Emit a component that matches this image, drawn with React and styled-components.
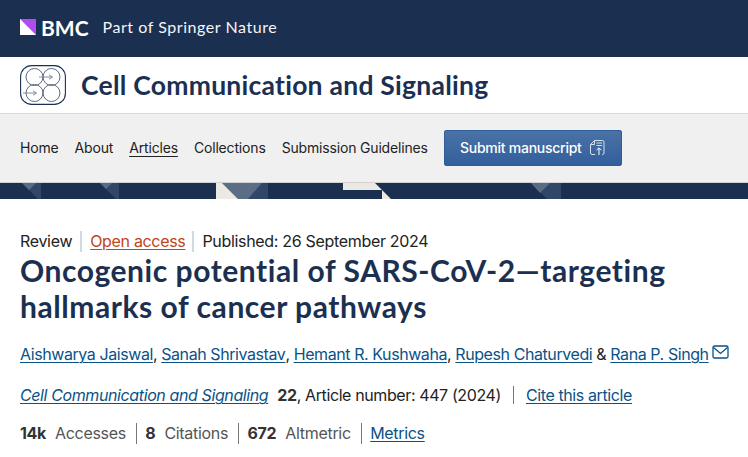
import React from "react";
import styled, { createGlobalStyle } from "styled-components";

const Global = createGlobalStyle`
  html, body { margin: 0; padding: 0; background: #fff; }
  body { font-family: Inter, "Liberation Sans", sans-serif; width: 748px; height: 457px; overflow: hidden; }
`;
const TopBar = styled.header`
  height: 57px; background: #1b3051; color: #fff; display: flex; align-items: center; padding: 0 20px 3px; box-sizing: border-box;
`;
const BrandMark = styled.span`
  display: flex; align-items: center; gap: 5px; margin-right: 14px;
`;
const BrandName = styled.span`
  font: 700 21px/1 Lato, sans-serif;
`;
const Tagline = styled.span`
  font: 400 16px/1 Lato, sans-serif; letter-spacing: .55px; color: #f4f5f7;
`;
const JournalBar = styled.div`
  height: 56px; display: flex; align-items: center; padding: 0 20px; gap: 15px; background: #fff;
`;
const JournalTitle = styled.div`
  font: 700 26.5px/1 Lato, sans-serif; color: #1b3051; letter-spacing: .25px;
`;
const Nav = styled.nav`
  height: 70px; background: #f0f0f0; border-top: 1px solid #dadada; border-bottom: 1px solid #d2d2d2; box-sizing: border-box; display: flex; align-items: center; padding: 0 20px 1px; gap: 16px;
`;
const NavLink = styled.a`
  font-size: 14px; letter-spacing: -.17px; color: #222; text-decoration: ${p => (p.$active ? "underline" : "none")}; text-underline-offset: 3px; text-decoration-thickness: 1px;
`;
const SubmitButton = styled.button`
  flex-shrink: 0; width: 178px; height: 36px; border: 1px solid #2f5f9b; border-radius: 2px; background: linear-gradient(#4a72a6, #325f9c); color: #fff; font: 500 14px Inter, sans-serif; letter-spacing: -.25px; display: flex; align-items: center; justify-content: center; gap: 7px; padding: 0;
`;
const Pattern = styled.svg`
  display: block; width: 748px; height: 16px;
`;
const Main = styled.main`
  padding: 31px 20px 0;
  color: #222;
  letter-spacing: -.32px;
`;
const MetaRow = styled.div`
  display: flex; align-items: center; font-size: 16px; line-height: 22px; height: 22px;
`;
const MetaItem = styled.span`
  padding: 0 7px 0 8px; border-left: ${p => (p.$first ? "none" : "2px solid #cfdae4")};
  ${p => p.$first && "padding: 0 8px 0 0;"}
  height: 21px; line-height: 21px;
`;
const OpenAccess = styled.a`
  color: #c0451a; text-decoration: underline; text-underline-offset: 2px; text-decoration-thickness: 1px;
`;
const Title = styled.h1`
  margin: 0; font: 700 30px/36px Lato, sans-serif; color: #1b3051; letter-spacing: .55px;
`;
const Authors = styled.div`
  margin-top: 18px; font-size: 16px; line-height: 24px; letter-spacing: -.42px; display: flex; align-items: center; white-space: pre;
`;
const A = styled.a`
  color: #0a5287; text-decoration: underline; text-underline-offset: 2px; text-decoration-thickness: 1px;
  ${p => p.$italic && "font-style: italic; margin-right: 9px;"}
`;
const Mail = styled.svg`
  margin-left: 3px; margin-top: -4px; display: block; flex-shrink: 0;
`;
const Citation = styled.div`
  margin-top: 17px; font-size: 16px; line-height: 24px; letter-spacing: -.39px; display: flex; align-items: center; white-space: pre;
`;
const Sep = styled.span`
  display: inline-block; width: 1px; height: ${p => (p.$tall ? "21px" : "18px")}; background: #777;
  margin: ${p => (p.$tall ? "0 8.5px 0 10px" : "0 12px")};
`;
const Metrics = styled.div`
  margin-top: 15px; font-size: 16px; line-height: 22px; display: flex; align-items: center; white-space: pre;
`;
const Strong = styled.b`
  font-weight: 700; color: #333;
`;
const Muted = styled.span`
  color: #555; margin-left: 9px;
`;

export default function App() {
  return (
    <>
      <Global />
      <TopBar>
        <BrandMark>
          <svg width="16" height="16" viewBox="0 0 16 16">
            <rect width="16" height="16" fill="#fff" />
            <path d="M0 0H16V16Z" fill="#b14cf0" />
          </svg>
          <BrandName>BMC</BrandName>
        </BrandMark>
        <Tagline>Part of Springer Nature</Tagline>
      </TopBar>
      <JournalBar>
        <svg width="46" height="40" viewBox="0 0 46 40" fill="none" stroke="#1b3051">
          <rect x=".6" y=".6" width="44.8" height="38.8" rx="11" strokeWidth="1.1" />
          <g strokeWidth=".9" stroke="#4b5a76">
            <circle cx="14.5" cy="12" r="8.5" />
            <circle cx="31.5" cy="12" r="8.5" />
            <circle cx="14.5" cy="28" r="8.5" />
            <circle cx="31.5" cy="28" r="8.5" />
            <path d="M19 12H32M29 9.8L32.5 12L29 14.2" stroke="#7b7f9c" />
            <path d="M3 28H16M13 25.8L16.5 28L13 30.2" stroke="#7b7f9c" />
          </g>
        </svg>
        <JournalTitle>Cell Communication and Signaling</JournalTitle>
      </JournalBar>
      <Nav>
        <NavLink>Home</NavLink>
        <NavLink>About</NavLink>
        <NavLink $active>Articles</NavLink>
        <NavLink>Collections</NavLink>
        <NavLink>Submission Guidelines</NavLink>
        <SubmitButton>
          Submit manuscript
          <svg width="17" height="17" viewBox="0 0 17 17" fill="none" stroke="#d5e0ee" strokeWidth="1">
            <path d="M6 15.5H3A1.5 1.5 0 0 1 1.5 14V5.5L5.5 1.5H13.5A1.5 1.5 0 0 1 15 3V14A1.5 1.5 0 0 1 13.5 15.5H13" />
            <path d="M5.5 1.5V5.5H1.5M7.5 4H13M7.5 6.5H13" />
            <path d="M10 16V9M7.6 11.2L10 8.8L12.4 11.2" stroke="#fff" />
          </svg>
        </SubmitButton>
      </Nav>
      <Pattern viewBox="0 0 748 16">
        <rect width="748" height="16" fill="#1b3051" />
        <path d="M22 0H41V16H38Z" fill="#31476a" />
        <path d="M22 0H36L29 7Z" fill="#5a6c85" />
        <path d="M100 0H119V16H116Z" fill="#31476a" />
        <path d="M100 0H112L106 6Z" fill="#5a6c85" />
        <path d="M262 0H268V16H248Z" fill="#31476a" />
        <path d="M222 0H262L248 16H238Z" fill="#5c6e86" />
        <path d="M216 0H222L238 16H216Z" fill="#ebe9e4" />
        <path d="M343 0H375L391 16H382V7H343Z" fill="#ebe9e4" />
        <path d="M531 0H561V16H547Z" fill="#31476a" />
        <path d="M531 0H550L540 10Z" fill="#5a6c85" />
      </Pattern>
      <Main>
        <MetaRow>
          <MetaItem $first>Review</MetaItem>
          <MetaItem><OpenAccess>Open access</OpenAccess></MetaItem>
          <MetaItem>Published: 26 September 2024</MetaItem>
        </MetaRow>
        <Title>Oncogenic potential of SARS-CoV-2—targeting<br />hallmarks of cancer pathways</Title>
        <Authors>
          <A>Aishwarya Jaiswal</A>, <A>Sanah Shrivastav</A>, <A>Hemant R. Kushwaha</A>, <A>Rupesh Chaturvedi</A> &amp; <A>Rana P. Singh</A>
          <Mail width="17" height="14" viewBox="0 0 17 14" fill="none" stroke="#0a5287" strokeWidth="1.3">
            <rect x="1" y="1" width="15" height="12" rx="1.5" />
            <path d="M1.5 2.5L8.5 8.5L15.5 2.5" />
          </Mail>
        </Authors>
        <Citation>
          <A $italic>Cell Communication and Signaling</A><Strong>22</Strong>, Article number: 447 (2024)<Sep /><A>Cite this article</A>
        </Citation>
        <Metrics>
          <Strong>14k</Strong><Muted>Accesses</Muted><Sep $tall />
          <Strong>8</Strong><Muted>Citations</Muted><Sep $tall />
          <Strong>672</Strong><Muted>Altmetric</Muted><Sep $tall />
          <A>Metrics</A>
        </Metrics>
      </Main>
    </>
  );
}
